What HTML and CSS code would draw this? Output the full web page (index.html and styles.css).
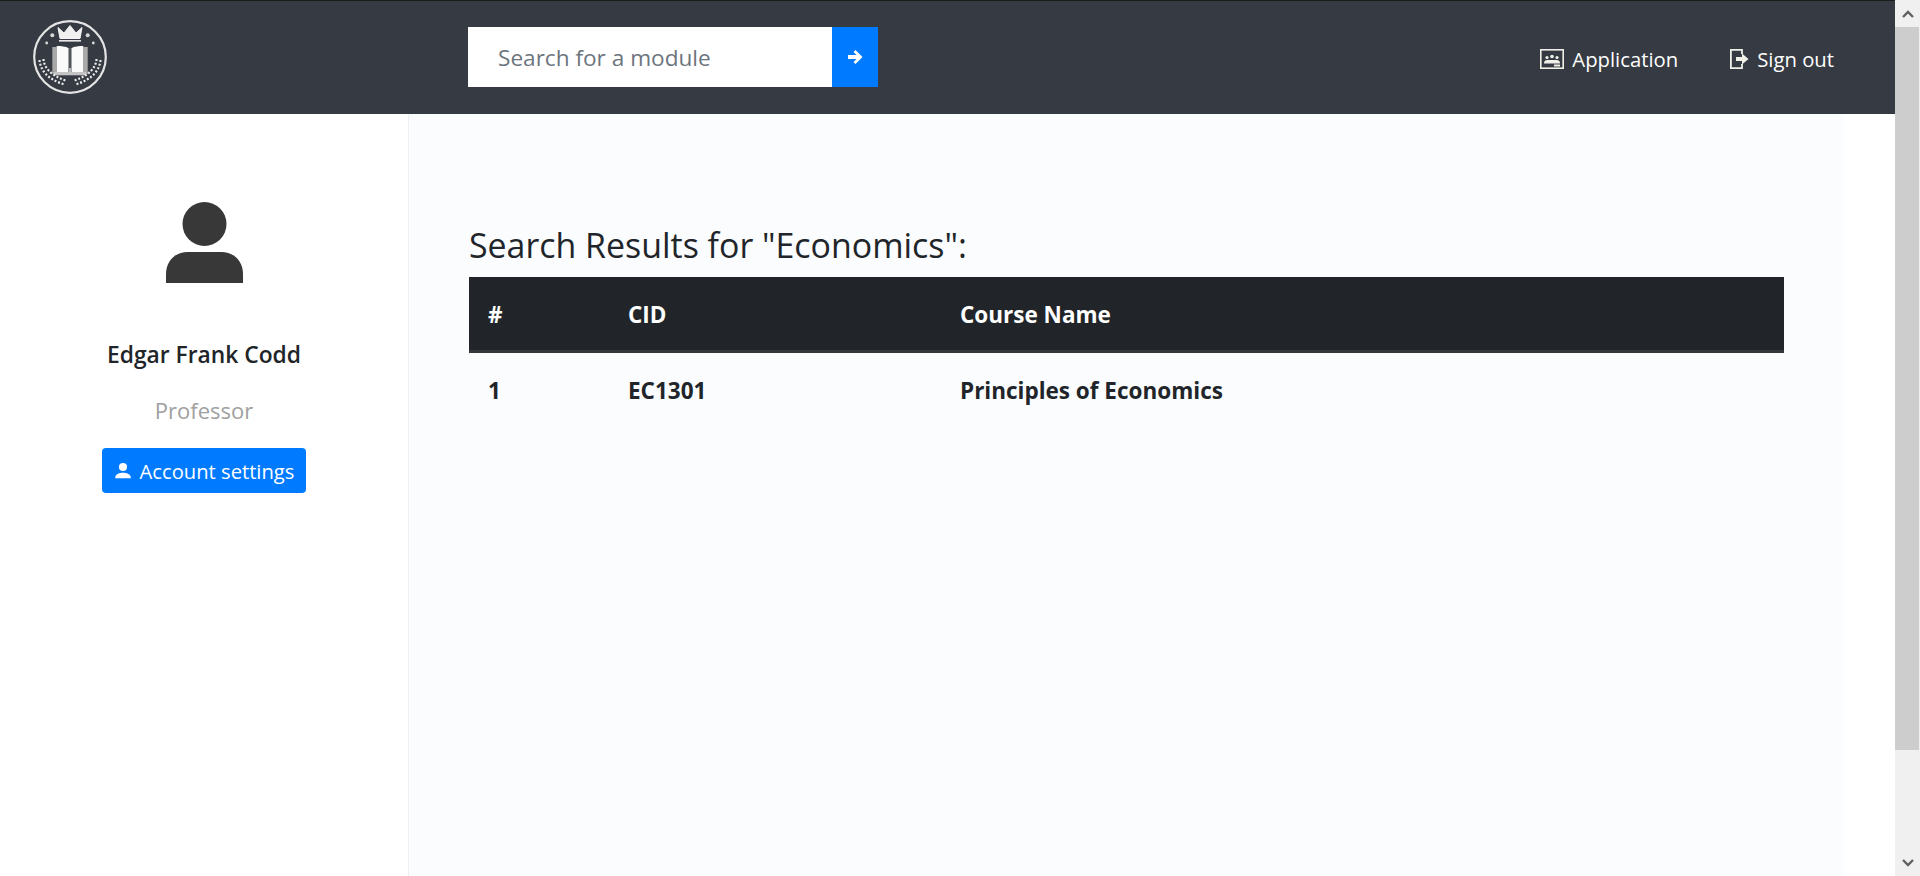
FILE: index.html
```html
<!DOCTYPE html>
<html lang="en">
<head>
    <meta charset="UTF-8">
    <meta name="viewport" content="width=device-width, initial-scale=1.0">
    <title>Search Results</title>
    <link rel="stylesheet" href="styles.css">
</head>
<body>
    <div class="page">
        <div class="page-main">
            <header class="topbar">
                <a href="#" class="topbar-logo">
                    <svg width="74" height="74" viewBox="0 0 74 74">
                        <circle cx="37" cy="37" r="35.8" fill="none" stroke="#e4e4e4" stroke-width="2.2"/>
                        <path d="M25 7.5 L31 13 L37 5.5 L43 13 L49 7.5 L47 18.5 H27 Z" fill="#f0f0f0" stroke="#f4f4f4" stroke-width="1" stroke-linejoin="round"/>
                        <rect x="26" y="20" width="22" height="1.6" fill="#e8e8e8"/>
                        <circle cx="19.3" cy="15.3" r="2" fill="#d8d8d8"/>
                        <circle cx="54.7" cy="15.3" r="2" fill="#d8d8d8"/>
                        <circle cx="13.7" cy="23" r="1.4" fill="#d8d8d8"/>
                        <circle cx="60.3" cy="23" r="1.4" fill="#d8d8d8"/>
                        <path d="M19.3 27 H23.7 V54 H19.3 Z M50.3 27 H54.7 V54 H50.3 Z" fill="#a8a8a8"/>
                        <path d="M23.7 26 C28 26 33 26.5 35.3 28 V52 H23.7 Z M38.7 28 C41 26.5 46 26 50.3 26 V52 H38.7 Z" fill="#fafafa"/>
                        <path d="M35.3 28 H38.7 V52 H35.3 Z" fill="#b8b8b8"/>
                        <path d="M36.2 28 H37.8 V48 H36.2 Z" fill="#383c44"/>
                        <path d="M21 52 H53 V55.3 H21 Z" fill="#c4c4c4"/>
                        <path d="M6.5 40 C7.5 50 14 59 31.5 64.5" fill="none" stroke="#ececec" stroke-width="2.2" stroke-dasharray="2 1.8"/>
                        <path d="M10.5 39 C11 47 17 55 32.5 60.5" fill="none" stroke="#ececec" stroke-width="2.2" stroke-dasharray="2 1.8"/>
                        <path d="M67.5 40 C66.5 50 60 59 42.5 64.5" fill="none" stroke="#ececec" stroke-width="2.2" stroke-dasharray="2 1.8"/>
                        <path d="M63.5 39 C63 47 57 55 41.5 60.5" fill="none" stroke="#ececec" stroke-width="2.2" stroke-dasharray="2 1.8"/>
                    </svg>
                </a>
                <form class="search-form">
                    <input class="search-input" type="text" placeholder="Search for a module">
                    <button class="search-btn" type="button" aria-label="Search">
                        <svg width="16" height="16" viewBox="0 0 16 16"><path d="M8.5 1 L15.5 8 L8.5 15 L6.5 13 L9.5 10 H1 V6 H9.5 L6.5 3 Z" fill="#fff"/></svg>
                    </button>
                </form>
                <nav class="topbar-nav">
                    <a href="#" class="nav-link">
                        <svg width="24" height="20" viewBox="0 0 24 20"><rect x="0.8" y="0.8" width="22.4" height="18.4" fill="none" stroke="#f0f0e8" stroke-width="1.6"/><path d="M4 14.5 C4 11.5 6 11 7.5 11 H16.5 C18 11 20 11.5 20 14.5 Z" fill="#f0f0e8"/><circle cx="7" cy="8.5" r="1.6" fill="#f0f0e8"/><circle cx="12" cy="7.5" r="1.8" fill="#f0f0e8"/><circle cx="17" cy="8.5" r="1.6" fill="#f0f0e8"/><rect x="14" y="15.5" width="6" height="2" fill="#f0f0e8"/></svg>
                        Application
                    </a>
                    <a href="#" class="nav-link">
                        <svg width="19" height="20" viewBox="0 0 19 20"><path d="M12 5 V0.9 H0.9 V19.1 H12 V15" fill="none" stroke="#f0f0e8" stroke-width="1.8"/><path d="M6 8 H12 V4.5 L18.5 10 L12 15.5 V12 H6 Z" fill="#f0f0e8"/></svg>
                        Sign out
                    </a>
                </nav>
            </header>
            <div class="content-wrap">
                <aside class="sidebar">
                    <svg class="avatar" width="78" height="81" viewBox="-0.5 0 78 81">
                        <circle cx="39" cy="22" r="22" fill="#383838"/>
                        <path d="M0.5 81 V72 C0.5 58 11 50 22 50 H56 C67 50 77.5 58 77.5 72 V81 Z" fill="#383838"/>
                    </svg>
                    <div class="profile-name">Edgar Frank Codd</div>
                    <div class="profile-role">Professor</div>
                    <a href="#" class="btn">
                        <svg width="18" height="18" viewBox="0 0 16 16"><circle cx="8" cy="4.5" r="3.6" fill="#fff"/><path d="M1 14.5 C1 10.5 5 9.5 8 9.5 C11 9.5 15 10.5 15 14.5 Z" fill="#fff"/></svg>
                        Account settings
                    </a>
                </aside>
                <main class="content">
                    <h2 class="results-title">Search Results for "Economics":</h2>
                    <table class="results-table">
                        <thead>
                            <tr><th class="col-num">#</th><th class="col-cid">CID</th><th>Course Name</th></tr>
                        </thead>
                        <tbody>
                            <tr><td>1</td><td>EC1301</td><td>Principles of Economics</td></tr>
                        </tbody>
                    </table>
                </main>
                <div class="content-gutter"></div>
            </div>
        </div>
        <div class="scrollbar">
            <div class="scroll-arrow"><svg width="12" height="8" viewBox="0 0 12 8"><path d="M1 7 L6 2 L11 7" fill="none" stroke="#606060" stroke-width="2.4"/></svg></div>
            <div class="scroll-thumb"></div>
            <div class="scroll-track"></div>
            <div class="scroll-arrow"><svg width="12" height="8" viewBox="0 0 12 8"><path d="M1 1 L6 6 L11 1" fill="none" stroke="#606060" stroke-width="2.4"/></svg></div>
        </div>
    </div>
</body>
</html>
```

FILE: styles.css
```css
* {
    margin: 0;
    padding: 0;
    box-sizing: border-box;
}

html, body {
    height: 100%;
    overflow: hidden;
}

body {
    font-family: 'Open Sans', 'Noto Sans', sans-serif;
    color: #212529;
    background: #fff;
}

.page {
    display: flex;
    height: 876px;
}

.page-main {
    flex: 1;
    display: flex;
    flex-direction: column;
    min-width: 0;
}

/* top bar */
.topbar {
    height: 114px;
    background: #363b43;
    border-top: 1px solid #1c1c1c;
    display: flex;
    align-items: center;
    padding: 0 0 2px 33px;
}

.topbar-logo {
    display: flex;
    width: 435px;
}

.search-form {
    display: flex;
    height: 60px;
}

.search-input {
    width: 364px;
    border: none;
    outline: none;
    padding: 2px 0 0 30px;
    font-family: inherit;
    font-size: 22.6px;
    background: #fff;
}

.search-input::placeholder {
    color: #6c757d;
    opacity: 1;
}

.search-btn {
    width: 46px;
    border: none;
    background: #007bff;
    display: flex;
    align-items: center;
    justify-content: center;
}

.topbar-nav {
    margin-left: auto;
    display: flex;
    gap: 52px;
    padding: 4px 61px 0 0;
}

.nav-link {
    display: flex;
    align-items: center;
    gap: 8px;
    color: #fff;
    text-decoration: none;
    font-size: 20.3px;
}

/* sidebar */
.content-wrap {
    flex: 1;
    display: flex;
    min-height: 0;
}

.sidebar {
    width: 409px;
    border-right: 1px solid #eef0f2;
    background: #fff;
    display: flex;
    flex-direction: column;
    align-items: center;
    padding-top: 88px;
}

.avatar {
    margin-bottom: 57px;
}

.profile-name {
    font-size: 22.8px;
    font-weight: 600;
    line-height: 30px;
    margin-bottom: 25px;
}

.profile-role {
    font-size: 22px;
    color: #a0a0a0;
    line-height: 30px;
    margin-bottom: 23px;
}

.btn {
    display: flex;
    align-items: center;
    justify-content: center;
    gap: 8px;
    width: 204px;
    height: 45px;
    background: #007bff;
    color: #fff;
    text-decoration: none;
    font-size: 20.2px;
    border-radius: 4px;
}

/* results */
.content {
    flex: 1;
    background: #fafcfe;
    padding: 104px 60px 0;
    min-width: 0;
}

.results-title {
    font-size: 33.9px;
    font-weight: 400;
    line-height: 54px;
    margin-bottom: 5px;
}

.results-table {
    width: 100%;
    border-collapse: separate;
    border-spacing: 0;
    font-size: 22.5px;
    font-weight: 700;
}

.results-table th,
.results-table td {
    text-align: left;
    padding: 0 19px;
}

.results-table th {
    height: 76px;
    padding-top: 2px;
    background: #212529;
    color: #fff;
    border-bottom: 3px solid #32383e;
}

.results-table td {
    height: 76px;
    padding-bottom: 1px;
}

.col-num {
    width: 140px;
}

.col-cid {
    width: 332px;
}

.content-gutter {
    width: 51px;
    background: #fff;
}

/* scrollbar */
.scrollbar {
    width: 25px;
    background: #f0f0f0;
    display: flex;
    flex-direction: column;
}

.scroll-arrow {
    height: 27px;
    display: flex;
    align-items: center;
    justify-content: center;
    background: #f0f0f0;
}

.scroll-thumb {
    height: 723px;
    margin-right: 1px;
    background: #cdcdcd;
}

.scroll-track {
    flex: 1;
}
```
